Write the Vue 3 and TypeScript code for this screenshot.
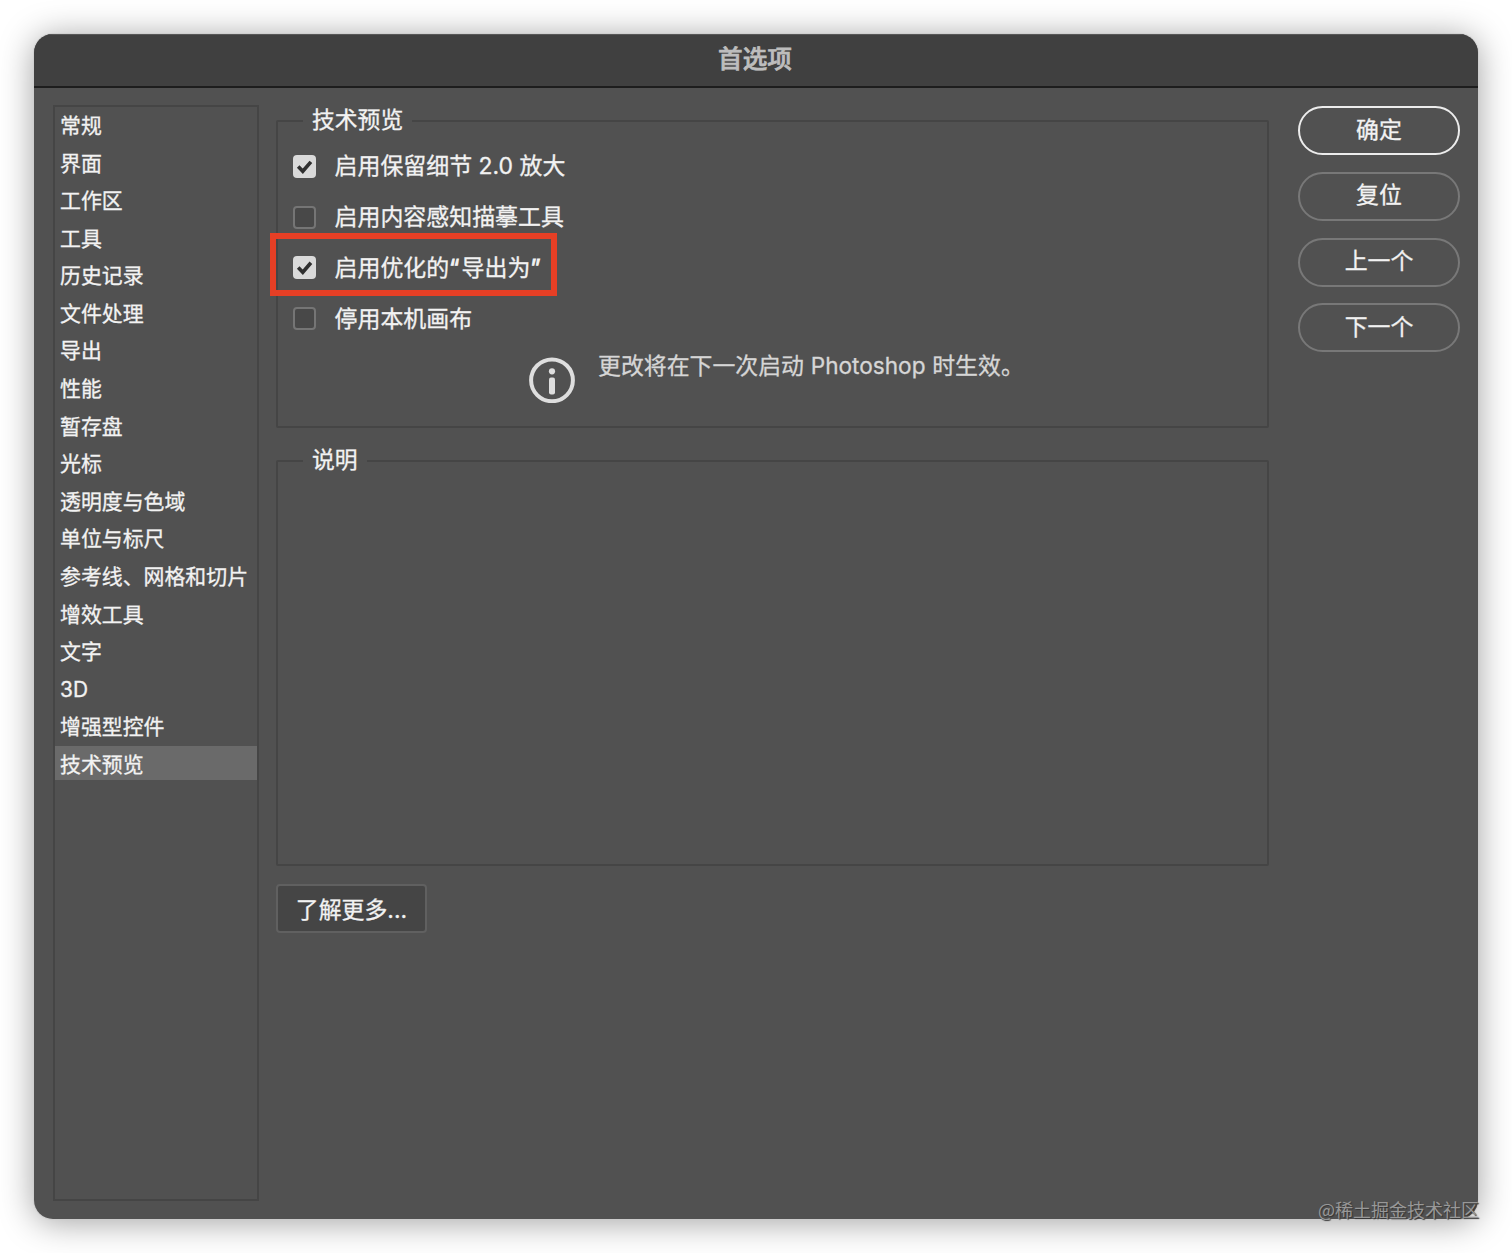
<script setup lang="ts">
import { ref } from 'vue'

interface Option {
  label: string
  checked: boolean
  highlighted?: boolean
}

const categories: string[] = [
  '常规', '界面', '工作区', '工具', '历史记录', '文件处理', '导出', '性能', '暂存盘',
  '光标', '透明度与色域', '单位与标尺', '参考线、网格和切片', '增效工具', '文字', '3D',
  '增强型控件', '技术预览',
]
const active = ref('技术预览')

const options = ref<Option[]>([
  { label: '启用保留细节 2.0 放大', checked: true },
  { label: '启用内容感知描摹工具', checked: false },
  { label: '启用优化的“导出为”', checked: true, highlighted: true },
  { label: '停用本机画布', checked: false },
])

const actions: string[] = ['确定', '复位', '上一个', '下一个']

// Quotation marks get their own spans so they can be spaced wider.
const parts = (label: string): string[] => label.split(/([“”])/).filter(Boolean)
const isQuote = (s: string): boolean => s === '“' || s === '”'
</script>

<template>
  <div class="stage">
    <div class="window">
      <header class="titlebar">首选项</header>
      <div class="content">
        <ul class="sidebar">
          <li
            v-for="c in categories"
            :key="c"
            class="category"
            :class="{ active: c === active }"
            @click="active = c"
          >{{ c }}</li>
        </ul>

        <main class="panel">
          <fieldset class="group preview">
            <legend>技术预览</legend>
            <div class="options">
              <div
                v-for="o in options"
                :key="o.label"
                class="option"
                @click="o.checked = !o.checked"
              >
                <span class="box" :class="{ checked: o.checked }">
                  <svg v-if="o.checked" viewBox="0 0 23 23" width="23" height="23">
                    <path d="M5.2 11.4 L9.8 16.2 L17.9 6.8" fill="none" stroke="#303030" stroke-width="3.6" />
                  </svg>
                </span>
                <span class="label"><span v-for="(p, i) in parts(o.label)" :key="i" :class="{ quote: isQuote(p) }">{{ p }}</span></span>
                <span v-if="o.highlighted" class="highlight"></span>
              </div>
            </div>
            <div class="notice">
              <svg viewBox="0 0 46 46" width="46" height="46">
                <circle cx="23" cy="23.3" r="20.9" fill="none" stroke="#dedede" stroke-width="4" />
                <circle cx="23" cy="14.3" r="3.1" fill="#dedede" />
                <rect x="20" y="20.5" width="6" height="17" rx="2" fill="#dedede" />
              </svg>
              <p>更改将在下一次启动 <span class="product">Photoshop</span> 时生效。</p>
            </div>
          </fieldset>

          <fieldset class="group description">
            <legend>说明</legend>
          </fieldset>

          <button class="more">了解更多...</button>
        </main>

        <aside class="actions">
          <button v-for="(a, i) in actions" :key="a" :class="{ primary: i === 0 }">{{ a }}</button>
        </aside>
      </div>
    </div>
    <div class="watermark">@稀土掘金技术社区</div>
  </div>
</template>

<style>
body {
  margin: 0;
  background: #fff;
}
</style>

<style scoped>
.stage {
  position: relative;
  box-sizing: border-box;
  width: 1512px;
  height: 1253px;
  padding: 34px;
  overflow: hidden;
  background: #fff;
  color: #f2f2f2;
  font-family: Inter, "Noto Sans CJK SC", sans-serif;
  -webkit-text-stroke: 0.3px currentColor;
}
.window {
  display: flex;
  flex-direction: column;
  height: 1185px;
  border-radius: 19px;
  overflow: hidden;
  background: #515151;
  box-shadow: 0 0 0 1px rgba(205, 205, 205, 0.7), 0 3px 34px rgba(0, 0, 0, 0.38);
}
.titlebar {
  box-sizing: border-box;
  height: 54px;
  padding-right: 2px;
  border-top: 1px solid #585858;
  border-bottom: 2px solid #1d1d1d;
  background: #404040;
  color: #bdbdbd;
  font-size: 24.6px;
  font-weight: 500;
  line-height: 49px;
  text-align: center;
  -webkit-text-stroke: 0.7px #bdbdbd;
}
.content {
  display: flex;
  flex: 1;
  padding: 0 18px 0 19px;
}
.sidebar {
  box-sizing: border-box;
  width: 206px;
  height: 1096px;
  margin: 17px 17px 0 0;
  padding: 0;
  border: 2px solid #454545;
  list-style: none;
}
.category {
  box-sizing: border-box;
  height: 34px;
  margin-bottom: 3.59px;
  padding: 4px 0 0 5px;
  font-size: 20.9px;
  line-height: 30px;
  white-space: nowrap;
}
.category.active {
  background: #6a6a6a;
}
.panel {
  width: 993px;
  padding-top: 18px;
}
.group {
  box-sizing: border-box;
  min-width: 0;
  margin: 0;
  padding: 0;
  border: 2px solid #454545;
  border-radius: 2px;
}
.group legend {
  height: 30px;
  margin-left: 25px;
  padding: 0 9px;
  font-size: 22.8px;
  line-height: 28px;
}
.preview {
  height: 322px;
}
.description {
  height: 420px;
  margin-top: 18px;
}
.options {
  padding: 5px 0 0 15px;
}
.option {
  position: relative;
  display: flex;
  align-items: center;
  height: 50.75px;
}
.box {
  box-sizing: border-box;
  width: 23px;
  height: 23px;
  margin-right: 18.5px;
  border: 2px solid #757575;
  border-radius: 4px;
  background: #484848;
}
.box.checked {
  border: 0;
  background: #dadada;
}
.box svg {
  display: block;
}
.label {
  padding-top: 1px;
  font-size: 22.95px;
  line-height: 35px;
  white-space: pre;
}
.quote {
  letter-spacing: 2.3px;
  -webkit-text-stroke-width: 0.8px;
}
.highlight {
  position: absolute;
  left: -23px;
  top: -10px;
  box-sizing: border-box;
  width: 287px;
  height: 63px;
  border: 6px solid #e63f25;
}
.notice {
  display: flex;
  padding: 13px 0 0 251px;
}
.notice p {
  margin: -8px 0 0 23px;
  color: #d6d6d6;
  font-size: 22.9px;
  line-height: 34px;
}
.product {
  margin: 0 0.3px;
  font-size: 22.6px;
}
button {
  box-sizing: border-box;
  padding: 0;
  color: #f2f2f2;
  font-family: inherit;
  font-size: 22.9px;
  -webkit-text-stroke: 0.3px currentColor;
}
.more {
  display: block;
  width: 151px;
  height: 49px;
  margin-top: 18px;
  padding-bottom: 2px;
  border: 2px solid #606060;
  border-radius: 4px;
  background: #454545;
}
.actions {
  display: flex;
  flex-direction: column;
  gap: 16.8px;
  margin: 18px 0 0 29px;
}
.actions button {
  width: 162px;
  height: 49px;
  padding-bottom: 6px;
  border: 2px solid #787878;
  border-radius: 25px;
  background: transparent;
}
.actions .primary {
  border-color: #ececec;
}
.watermark {
  position: absolute;
  left: 1318px;
  top: 1195px;
  color: #989898;
  font-family: "Noto Sans CJK SC", sans-serif;
  font-size: 18px;
  line-height: 28px;
  text-shadow: 1px 1px 1px #333;
  white-space: nowrap;
  -webkit-text-stroke: 0;
}
</style>
